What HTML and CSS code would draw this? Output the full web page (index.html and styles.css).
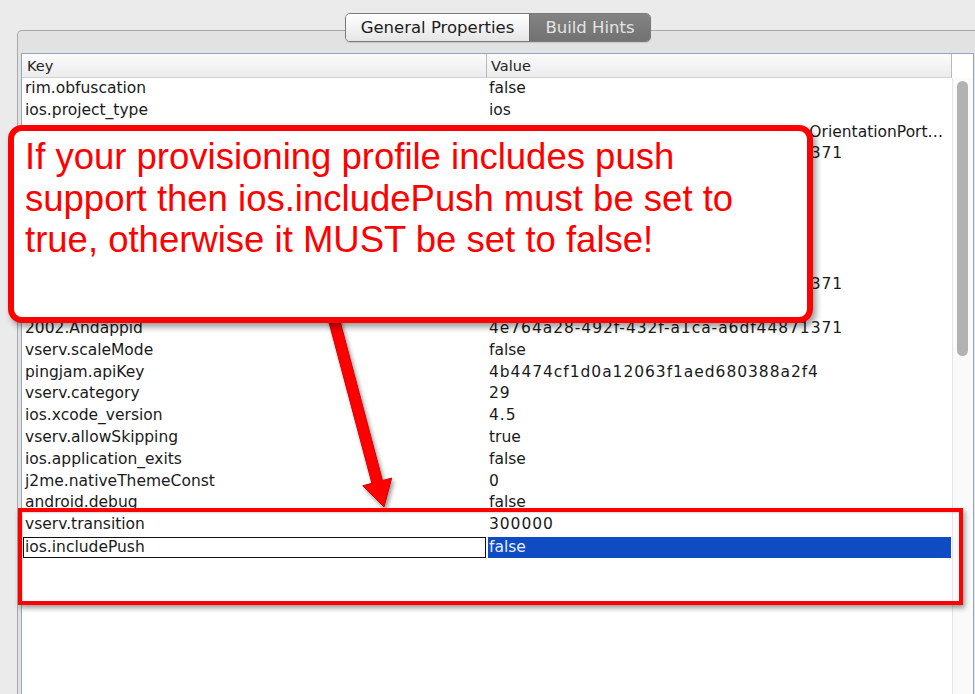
FILE: index.html
```html
<!DOCTYPE html>
<html>
<head>
<meta charset="utf-8">
<title>Build Hints</title>
<link rel="stylesheet" href="styles.css">
</head>
<body>
<div class="app">
  <div class="tabbar">
    <div class="seg">
      <div class="seg-item general">General Properties</div>
      <div class="seg-item hints">Build Hints</div>
    </div>
  </div>
  <div class="panel">
    <div class="table">
      <div class="thead">
        <div class="th key">Key</div>
        <div class="th val">Value</div>
        <div class="th corner"></div>
      </div>
      <div class="tbody">
        <div class="rows">
          <div class="row"><div class="k">rim.obfuscation</div><div class="v">false</div></div>
          <div class="row"><div class="k">ios.project_type</div><div class="v">ios</div></div>
          <div class="row"><div class="k">ios.orientations</div><div class="v">UIInterfaceOrientationPortrait:UIInterfaceOrientationPortraitUpsideDown:UIInterfaceOrientationLandscapeLeft</div></div>
          <div class="row"><div class="k">vserv.zoneId</div><div class="v num">4e764a28-492f-432f-a1ca-a6df44871371</div></div>
          <div class="row"><div class="k">ios.statusbar_hidden</div><div class="v">false</div></div>
          <div class="row"><div class="k">android.installLocation</div><div class="v">auto</div></div>
          <div class="row"><div class="k">ios.glAppDelegate</div><div class="v">false</div></div>
          <div class="row"><div class="k">vserv.showAds</div><div class="v">true</div></div>
          <div class="row"><div class="k">android.xapplication</div><div class="v">1</div></div>
          <div class="row"><div class="k">vserv.zone</div><div class="v num">4e764a28-492f-432f-a1ca-a6df44871371</div></div>
          <div class="row"><div class="k">android.gradle</div><div class="v">false</div></div>
          <div class="row"><div class="k">2002.Andappid</div><div class="v num">4e764a28-492f-432f-a1ca-a6df44871371</div></div>
          <div class="row"><div class="k">vserv.scaleMode</div><div class="v">false</div></div>
          <div class="row"><div class="k">pingjam.apiKey</div><div class="v num">4b4474cf1d0a12063f1aed680388a2f4</div></div>
          <div class="row"><div class="k">vserv.category</div><div class="v num">29</div></div>
          <div class="row"><div class="k">ios.xcode_version</div><div class="v num">4.5</div></div>
          <div class="row"><div class="k">vserv.allowSkipping</div><div class="v">true</div></div>
          <div class="row"><div class="k">ios.application_exits</div><div class="v">false</div></div>
          <div class="row"><div class="k">j2me.nativeThemeConst</div><div class="v num">0</div></div>
          <div class="row"><div class="k">android.debug</div><div class="v">false</div></div>
          <div class="row"><div class="k">vserv.transition</div><div class="v num">300000</div></div>
          <div class="row sel"><div class="k">ios.includePush</div><div class="v">false</div></div>
        </div>
        <div class="vscroll"><div class="thumb"></div></div>
      </div>
    </div>
  </div>

  <svg class="arrow" width="975" height="694" viewBox="0 0 975 694">
    <polygon points="338.3,314.6 382.5,480.5 391.7,478.0 384,507 362.7,485.8 371.9,483.3 327.7,317.4"/>
  </svg>
  <div class="hilite"></div>
  <div class="callout">If your provisioning profile includes push<br>support then ios.includePush must be set to<br>true, otherwise it MUST be set to false!</div>
</div>
</body>
</html>
```

FILE: styles.css
```css
* { box-sizing: border-box; }
html, body { margin: 0; height: 100%; overflow: hidden; }
body {
  background: #ebebeb;
  font-family: "DejaVu Sans", "Noto Sans", sans-serif;
  color: #1a1a1a;
}
.app { position: relative; width: 975px; height: 694px; overflow: hidden; }

/* segmented tabs */
.tabbar {
  position: relative;
  z-index: 1;
  display: flex;
  padding: 13px 0 0 345px;
  height: 42px;
}
.seg {
  display: flex;
  width: 306px;
  height: 29px;
  border: 1px solid #7a7a7a;
  border-radius: 5px;
  overflow: hidden;
  box-shadow: 0 1px 1px rgba(0,0,0,0.12);
}
.seg-item {
  display: flex;
  align-items: center;
  justify-content: center;
  font-size: 16.5px;
  white-space: nowrap;
}
.seg-item.general {
  width: 184px;
  background: linear-gradient(#ffffff, #f0f0f0 60%, #e6e6e6);
  color: #1c1c1c;
  border-right: 1px solid #6a6a6a;
}
.seg-item.hints {
  flex: 1;
  background: linear-gradient(#838383, #727272);
  color: #e4e4e4;
}

/* tab panel */
.panel {
  margin: -12px 0 0 17px;
  width: 970px;
  height: 680px;
  border: 1px solid #a9a9a9;
  border-bottom: none;
  border-radius: 5px 5px 0 0;
  background: #e2e2e2;
  padding: 22px 0 0 3px;
  display: flex;
  flex-direction: column;
}
.table {
  flex: 1;
  width: 953px;
  border: 1px solid #93a6c2;
  border-bottom: none;
  background: #fff;
  display: flex;
  flex-direction: column;
}
.thead {
  display: flex;
  height: 24px;
  flex: none;
}
.th {
  height: 24px;
  font-size: 14.5px;
  line-height: 24px;
  color: #222;
  background: linear-gradient(#fbfbfb, #ececec);
  border-bottom: 1px solid #d2d2d2;
  white-space: nowrap;
}
.th.key { width: 464px; padding-left: 5px; }
.th.val {
  width: 466px;
  padding-left: 4px;
  border-left: 1px solid #b9b9b9;
  border-right: 1px solid #b9b9b9;
}
.th.corner { flex: 1; background: #fff; border-bottom: none; }

.tbody { flex: 1; display: flex; }
.rows { width: 930px; }
.row {
  display: flex;
  height: 21.82px;
  font-size: 15.5px;
  line-height: 21.82px;
  color: #1a1a1a;
}
.row .k, .row .v {
  white-space: nowrap;
  overflow: hidden;
  text-overflow: ellipsis;
}
.row .k { width: 464px; padding-left: 3px; }
.row .v { width: 466px; padding-left: 3px; padding-right: 4px; }
.row .v.num { letter-spacing: 0.95px; }
.row.sel .k {
  margin: 1px 0 0 1px;
  width: 463px;
  height: 20.5px;
  line-height: 18.5px;
  border: 1px solid #111;
  padding-left: 1px;
}
.row.sel .v {
  margin: 1px 1px 0 2px;
  width: 463px;
  height: 20.5px;
  line-height: 20.5px;
  padding-left: 1px;
  background: #0f4bc3;
  color: #e6edff;
}

.vscroll {
  flex: 1;
  border-left: 1px solid #e4e4e4;
  background: #fafafa;
  padding: 3px 0 0 4px;
}
.thumb {
  width: 11px;
  height: 275px;
  border-radius: 6px;
  background: #b2b2b2;
}

/* annotations */
.arrow {
  position: absolute;
  left: 0;
  top: 0;
  pointer-events: none;
  filter: drop-shadow(2px 3px 2px rgba(0,0,0,0.4));
}
.arrow polygon { fill: #ff0000; stroke: #d40000; stroke-width: 1; stroke-linejoin: round; }

.hilite {
  position: absolute;
  left: 18px;
  top: 508px;
  width: 945px;
  height: 97px;
  border: 4px solid #ff0000;
  box-shadow: 2px 3px 5px rgba(0,0,0,0.4), inset 1px 1px 2px rgba(0,0,0,0.15);
}

.callout {
  position: absolute;
  left: 8px;
  top: 125px;
  width: 805px;
  height: 198px;
  border: 6px solid #ff0000;
  border-radius: 14px;
  background: #fff;
  box-shadow: 3px 4px 6px rgba(0,0,0,0.4);
  color: #ff0000;
  font-family: "Liberation Sans", Arial, sans-serif;
  font-size: 36.5px;
  line-height: 41.5px;
  padding: 5px 0 0 11px;
  white-space: nowrap;
}
```
